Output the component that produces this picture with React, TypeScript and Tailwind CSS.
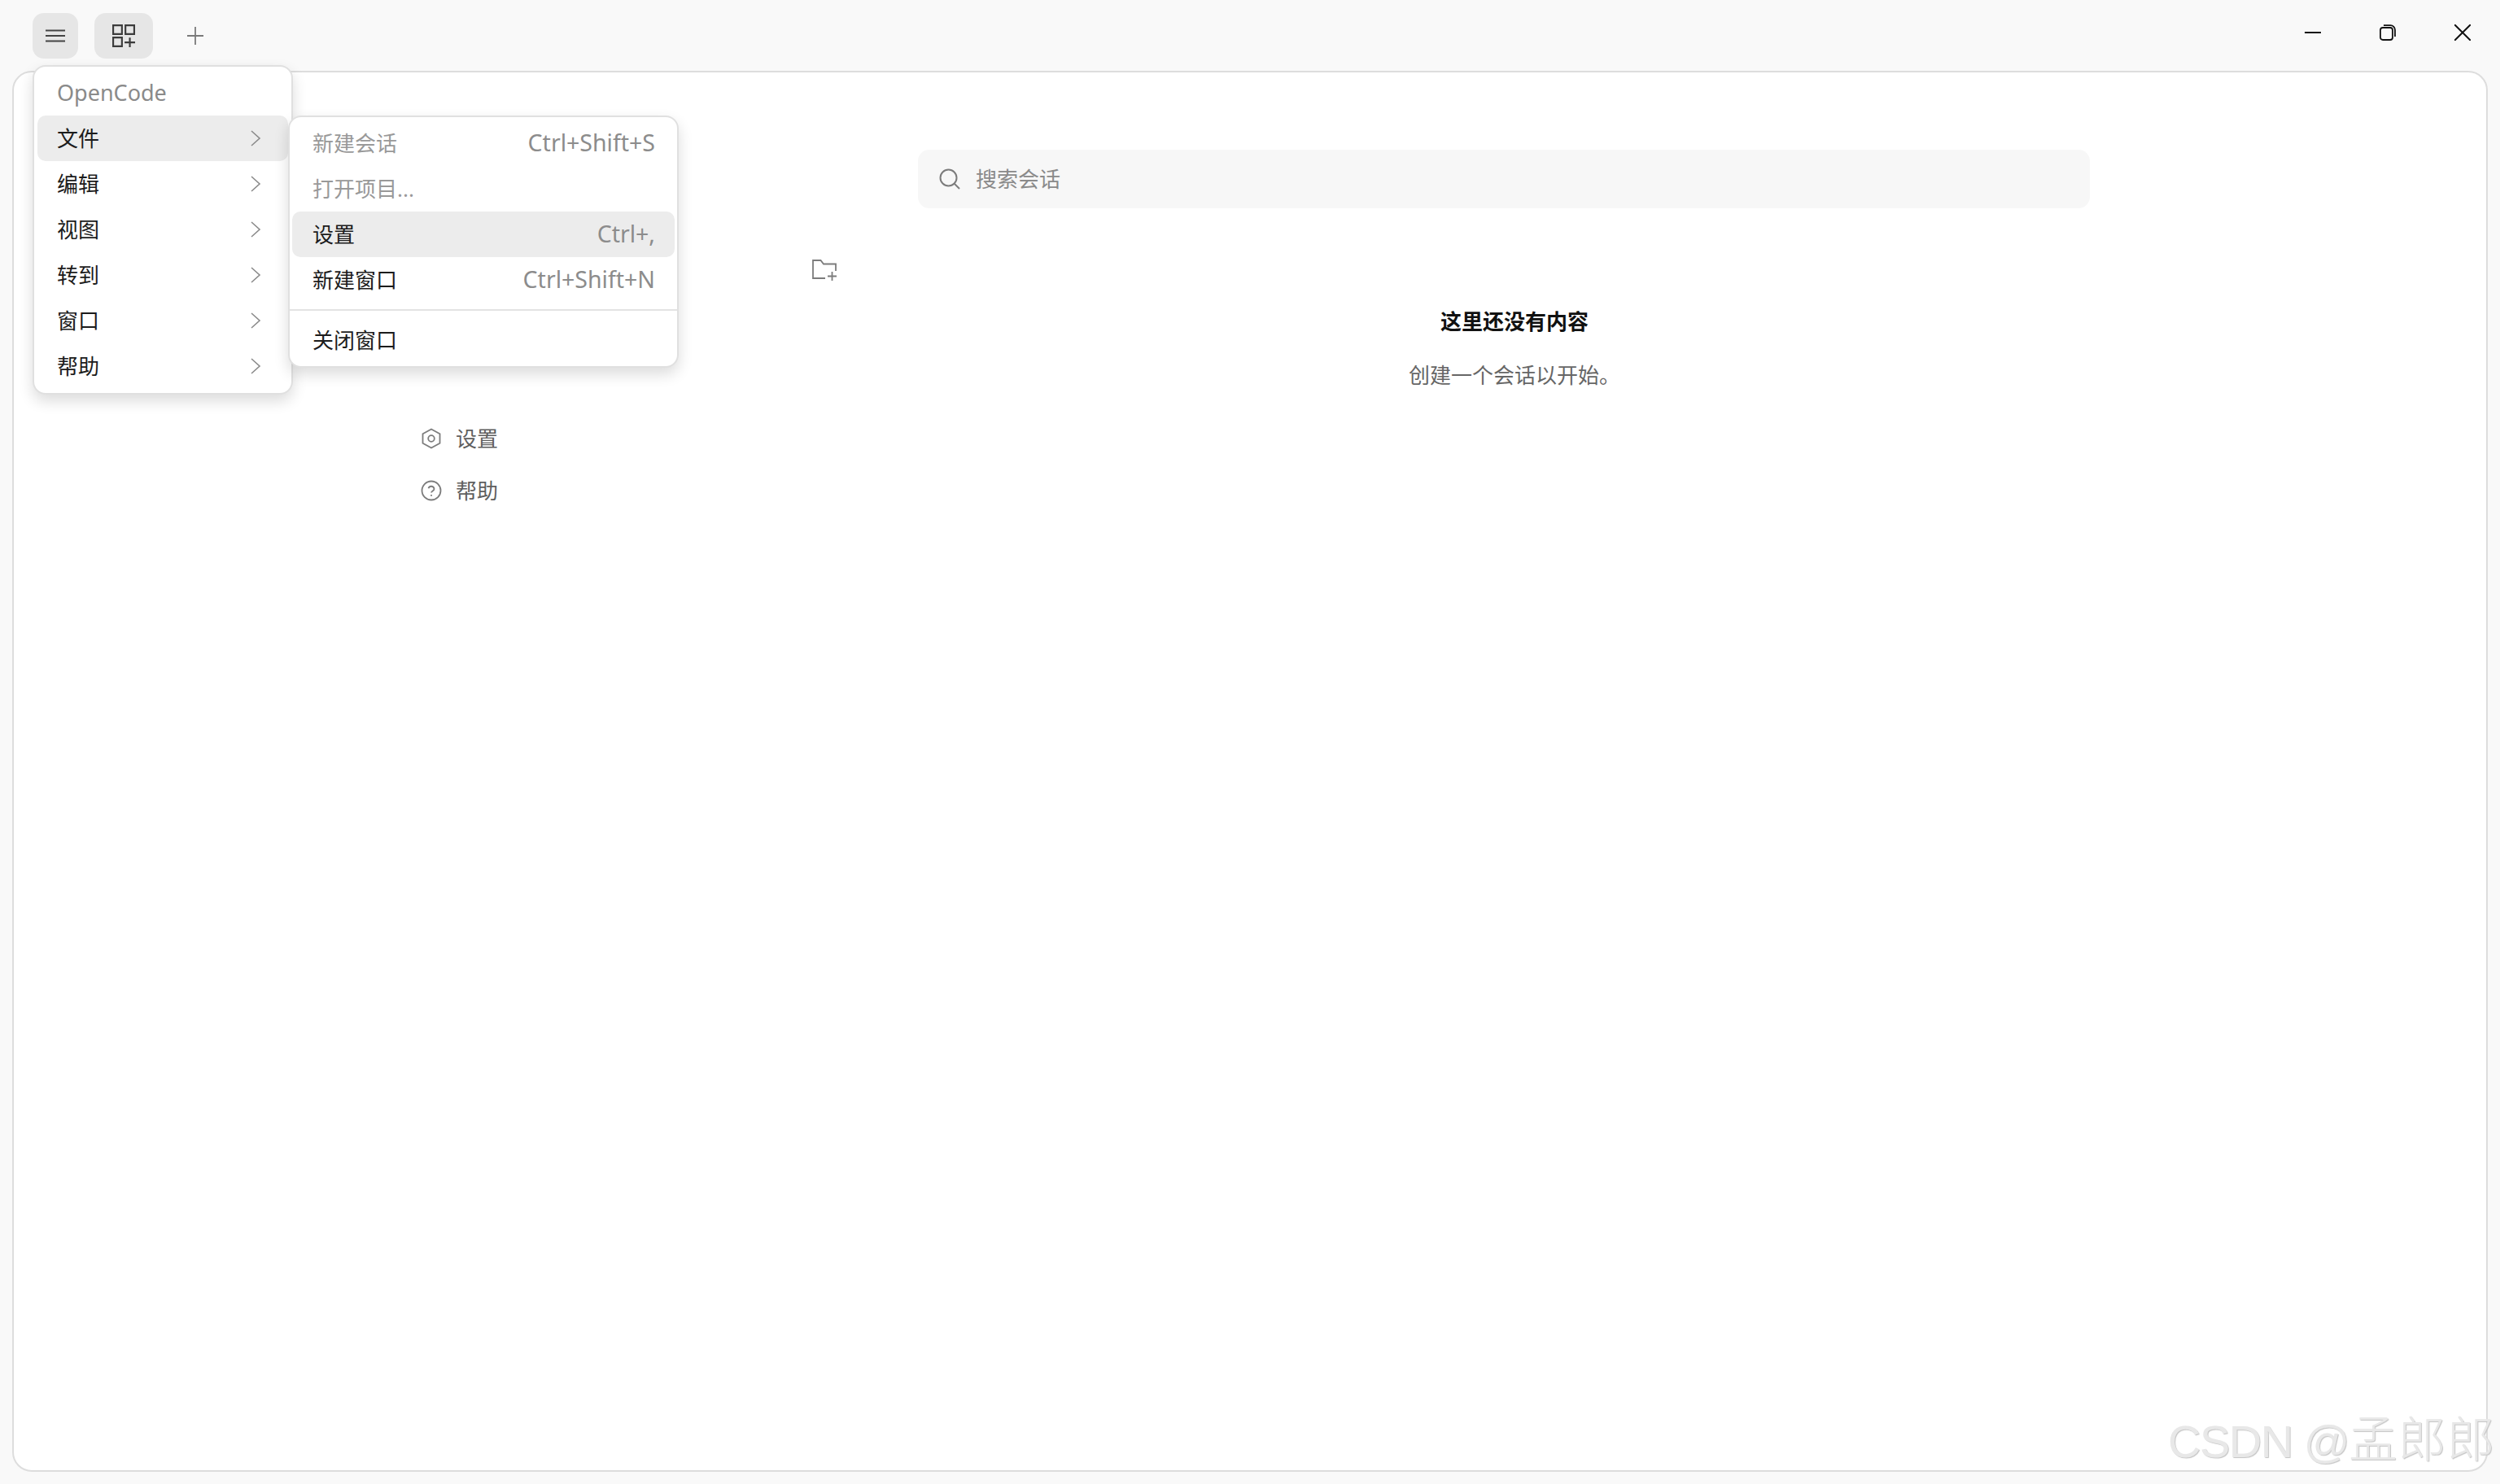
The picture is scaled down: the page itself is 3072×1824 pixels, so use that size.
import React from "react";

const font = "font-['Noto_Sans','Noto_Sans_CJK_SC',sans-serif]";

function Chevron() {
  return (
    <svg width="14" height="20" viewBox="0 0 14 20" fill="none" stroke="#8a8a8a" strokeWidth="1.6">
      <path d="M2 1l10 9-10 9" />
    </svg>
  );
}

function MenuRow({ label, active }: { label: string; active?: boolean }) {
  return (
    <div className={"mx-[4px] h-[56px] flex items-center justify-between pl-[24px] pr-[33px] rounded-[10px] text-[#1c1c1c] " + (active ? "bg-[#ececec]" : "")}>
      <span>{label}</span>
      <Chevron />
    </div>
  );
}

function SubRow({ label, hint, disabled, active }: { label: string; hint?: string; disabled?: boolean; active?: boolean }) {
  return (
    <div className={"mx-[3px] h-[56px] flex items-center justify-between pl-[25px] pr-[24px] rounded-[10px] " + (active ? "bg-[#ececec] " : "") + (disabled ? "text-[#999999]" : "text-[#1c1c1c]")}>
      <span>{label}</span>
      {hint ? <span className="-mt-[2px] text-[28.5px] text-[#8c8c8c]">{hint}</span> : null}
    </div>
  );
}

function SideItem({ icon, label }: { icon: React.ReactNode; label: string }) {
  return (
    <div className="h-[64px] flex items-center gap-[17px] pl-[16px] text-[26px] text-[#5f5f5f]">
      {icon}
      <span>{label}</span>
    </div>
  );
}

export default function App() {
  return (
    <div className={"relative w-[3072px] h-[1824px] overflow-hidden bg-[#f9f9f9] flex flex-col text-[26px] leading-none " + font}>
      <header className="h-[87px] shrink-0 flex items-start justify-between">
        <div className="flex items-center pl-[40px] pt-[16px]">
          <button className="w-[56px] h-[56px] rounded-[14px] bg-[#e6e6e6] flex items-center justify-center">
            <svg width="24" height="16" viewBox="0 0 24 16" fill="none" stroke="#444" strokeWidth="2">
              <path d="M0 1.5h24M0 8h24M0 14.5h24" />
            </svg>
          </button>
          <button className="ml-[20px] w-[72px] h-[56px] rounded-[14px] bg-[#e6e6e6] flex items-center justify-center">
            <svg width="28" height="28" viewBox="0 0 26 26" fill="none" stroke="#3c3c3c" strokeWidth="2">
              <path d="M1 1h10v10H1zM15 1h10v10H15zM1 15h10v10H1zM14 20.5h12M20 15v11" />
            </svg>
          </button>
          <div className="ml-[42px] w-[20px] h-[20px] flex items-center justify-center">
            <svg width="20" height="22" viewBox="0 0 20 22" fill="none" stroke="#7a7a7a" strokeWidth="1.8">
              <path d="M0 11h20M10 0v22" />
            </svg>
          </div>
        </div>
        <div className="flex">
          <div className="w-[92px] h-[80px] flex items-center justify-center">
            <svg width="20" height="2" viewBox="0 0 20 2" stroke="#111" strokeWidth="2"><path d="M0 1h20" /></svg>
          </div>
          <div className="w-[92px] h-[80px] flex items-center justify-center">
            <svg width="20" height="20" viewBox="0 0 20 20" fill="none" stroke="#111" strokeWidth="1.8">
              <rect x="1" y="4" width="15" height="15" rx="3" />
              <path d="M5 1.2h8.5a5.5 5.5 0 0 1 5.5 5.5V15" />
            </svg>
          </div>
          <div className="w-[92px] h-[80px] flex items-center justify-center">
            <svg width="20" height="20" viewBox="0 0 20 20" stroke="#111" strokeWidth="2"><path d="M0 0l20 20M20 0L0 20" /></svg>
          </div>
        </div>
      </header>

      <main className="flex-1 mx-[15px] mb-[15px] bg-white border-2 border-[#dddddd] rounded-[24px] flex">
        <aside className="ml-[484px] w-[548px] shrink-0 flex flex-col pr-[20px]">
          <div className="mt-[229px] flex justify-end">
            <svg width="32" height="27" viewBox="0 0 32 27" fill="none" stroke="#7c7c7c" strokeWidth="1.8">
              <path d="M17 24H2V2h9.5l3.5 4.5h15V15" />
              <path d="M20 21.5h11M25.5 16v11" />
            </svg>
          </div>
          <div className="mt-[162px]">
            <SideItem
              label="设置"
              icon={
                <svg width="26" height="26" viewBox="0 0 26 26" fill="none" stroke="#7c7c7c" strokeWidth="1.8">
                  <path d="M13 1.5l10.5 5.8v11.4L13 24.5 2.5 18.7V7.3z" />
                  <circle cx="13" cy="13" r="3.8" />
                </svg>
              }
            />
            <SideItem
              label="帮助"
              icon={
                <svg width="26" height="26" viewBox="0 0 26 26" fill="none" stroke="#7c7c7c" strokeWidth="1.8">
                  <circle cx="13" cy="13" r="11.5" />
                  <path d="M9.5 10.2a3.6 3.6 0 0 1 7 .8c0 2.4-3.5 2.6-3.5 4.6" />
                  <path d="M13 18v1.8" />
                </svg>
              }
            />
          </div>
        </aside>
        <section className="flex-1 flex flex-col pl-[79px]">
          <div className="mt-[95px] w-[1440px] h-[72px] rounded-[14px] bg-[#f7f7f7] flex items-center pl-[26px] gap-[19px] text-[#8a8a8a]">
            <svg width="26" height="26" viewBox="0 0 26 26" fill="none" stroke="#7c7c7c" strokeWidth="2">
              <circle cx="11.5" cy="11.5" r="10" />
              <path d="M18.5 18.5l6.5 6.5" />
            </svg>
            <span>搜索会话</span>
          </div>
          <div className="w-[1440px] flex flex-col items-center mt-[126px] pl-[26px]">
            <h1 className="font-semibold text-[#111111]">这里还没有内容</h1>
            <p className="mt-[40px] text-[#666666]">创建一个会话以开始。</p>
          </div>
        </section>
      </main>

      <div className="absolute left-[40px] top-[80px] w-[320px] h-[405px] bg-white rounded-[16px] border-2 border-[#e0e0e0] shadow-[0_8px_18px_rgba(0,0,0,0.14)] flex flex-col pt-[3px]">
        <div className="h-[57px] flex items-center pl-[28px] text-[27px] text-[#8a8a8a]">OpenCode</div>
        <MenuRow label="文件" active />
        <MenuRow label="编辑" />
        <MenuRow label="视图" />
        <MenuRow label="转到" />
        <MenuRow label="窗口" />
        <MenuRow label="帮助" />
      </div>

      <div className="absolute left-[354px] top-[142px] w-[480px] h-[310px] bg-white rounded-[16px] border-2 border-[#e0e0e0] shadow-[0_8px_18px_rgba(0,0,0,0.14)] flex flex-col pt-[4px]">
        <SubRow label="新建会话" hint="Ctrl+Shift+S" disabled />
        <SubRow label="打开项目..." disabled />
        <SubRow label="设置" hint="Ctrl+," active />
        <SubRow label="新建窗口" hint="Ctrl+Shift+N" />
        <div className="mt-[8px] h-[2px] bg-[#e3e3e3]" />
        <div className="mt-[8px]"><SubRow label="关闭窗口" /></div>
      </div>

      <div className="absolute left-[2664px] top-[1736px] whitespace-nowrap text-[56px] leading-[70px] tracking-[-1.5px] text-[#e8e8e8] font-['Liberation_Sans','Noto_Sans_CJK_SC',sans-serif] [text-shadow:1px_1px_1px_#c4c4c4]">
        CSDN @<span className="text-[60px] font-light tracking-normal">孟郎郎</span>
      </div>
    </div>
  );
}
